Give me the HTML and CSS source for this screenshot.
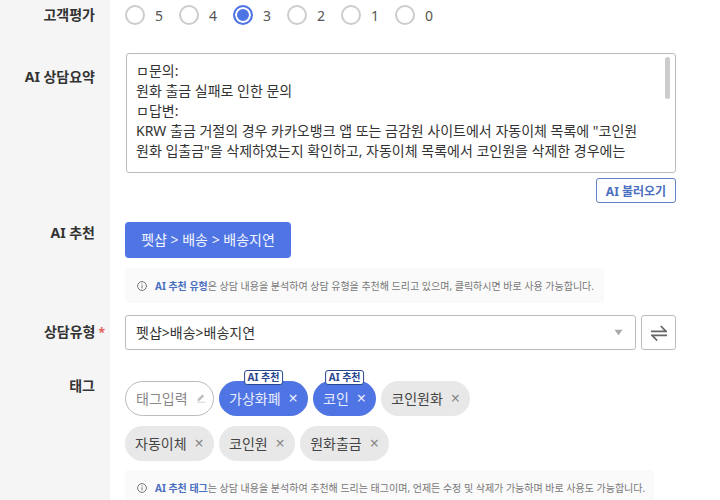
FILE: index.html
```html
<!DOCTYPE html>
<html lang="ko">
<head>
<meta charset="utf-8">
<title>상담 입력</title>
<link rel="stylesheet" href="styles.css">
</head>
<body>
<main class="form">
  <div class="label label-rating">고객평가</div>
  <div class="field field-rating">
    <span class="radio"></span><span class="rnum">5</span>
    <span class="radio"></span><span class="rnum">4</span>
    <span class="radio on"></span><span class="rnum">3</span>
    <span class="radio"></span><span class="rnum">2</span>
    <span class="radio"></span><span class="rnum">1</span>
    <span class="radio"></span><span class="rnum">0</span>
  </div>

  <div class="label label-summary">AI 상담요약</div>
  <div class="field field-summary">
    <div class="summary">
      <div class="line">ㅁ문의:</div>
      <div class="line">원화 출금 실패로 인한 문의</div>
      <div class="line">ㅁ답변:</div>
      <div class="line">KRW 출금 거절의 경우 카카오뱅크 앱 또는 금감원 사이트에서 자동이체 목록에 "코인원</div>
      <div class="line">원화 입출금"을 삭제하였는지 확인하고, 자동이체 목록에서 코인원을 삭제한 경우에는</div>
      <span class="thumb"></span>
    </div>
    <div class="summary-actions"><button class="load-btn">AI 불러오기</button></div>
  </div>

  <div class="label label-rec">AI 추천</div>
  <div class="field field-rec">
    <button class="rec-btn">펫샵 &gt; 배송 &gt; 배송지연</button>
    <div class="info info-type">
      <svg class="info-icon" viewBox="0 0 12 12"><circle cx="6" cy="6" r="4.4" fill="none" stroke="#777" stroke-width="1"/><rect x="5.5" y="5.2" width="1" height="3.2" fill="#777"/><rect x="5.5" y="3.4" width="1" height="1" fill="#777"/></svg>
      <span><b>AI 추천 유형</b>은 상담 내용을 분석하여 상담 유형을 추천해 드리고 있으며, 클릭하시면 바로 사용 가능합니다.</span>
    </div>
  </div>

  <div class="label label-type">상담유형<em>*</em></div>
  <div class="field field-type">
    <div class="select">
      <span>펫샵&gt;배송&gt;배송지연</span>
      <svg class="caret" viewBox="0 0 10 7"><path d="M0.5 0.5H9.5L5 6.5Z" fill="#aaa"/></svg>
    </div>
    <button class="swap">
      <svg viewBox="0 0 16 16" width="16" height="16"><path d="M0 6.3H15L9.8 1M16 10.4H1L6.2 15.6" fill="none" stroke="#666" stroke-width="1.7"/></svg>
    </button>
  </div>

  <div class="label label-tag">태그</div>
  <div class="field field-tag">
    <div class="tags">
      <div class="tag tag-input">태그입력<svg class="pencil" viewBox="0 0 10 10"><path d="M2 6.2L6.4 1.8L7.8 3.2L3.4 7.6H2Z M1 9.2H9.4" fill="#bbb" stroke="#bbb" stroke-width=".6"/></svg></div>
      <div class="tag tag-ai"><span class="badge">AI 추천</span>가상화폐<span class="x">×</span></div>
      <div class="tag tag-ai"><span class="badge">AI 추천</span>코인<span class="x">×</span></div>
      <div class="tag">코인원화<span class="x">×</span></div>
      <div class="tag">자동이체<span class="x">×</span></div>
      <div class="tag">코인원<span class="x">×</span></div>
      <div class="tag">원화출금<span class="x">×</span></div>
    </div>
    <div class="info info-tag">
      <svg class="info-icon" viewBox="0 0 12 12"><circle cx="6" cy="6" r="4.4" fill="none" stroke="#777" stroke-width="1"/><rect x="5.5" y="5.2" width="1" height="3.2" fill="#777"/><rect x="5.5" y="3.4" width="1" height="1" fill="#777"/></svg>
      <span><b>AI 추천 태그</b>는 상담 내용을 분석하여 추천해 드리는 태그이며, 언제든 수정 및 삭제가 가능하며 바로 사용도 가능합니다.</span>
    </div>
  </div>
</main>
</body>
</html>
```

FILE: styles.css
```css
* { box-sizing: border-box; }
html, body { margin: 0; height: 500px; overflow: hidden; background: #fff; }
body { font-family: "Noto Sans", "Noto Sans CJK KR", sans-serif; font-size: 14px; color: #333; }
button { font-family: inherit; cursor: pointer; }

.form { display: grid; grid-template-columns: 110px 1fr; grid-template-rows: 53px 169px 93px 61px 1fr; height: 500px; }
.label { background: #f5f5f5; text-align: right; padding-right: 15px; font-weight: 700; font-size: 14px; line-height: 20px; color: #333; }
.field { padding-left: 15px; padding-right: 44px; background: #fff; }

.label-rating { padding-top: 5px; }
.field-rating { display: flex; align-items: center; padding-bottom: 23px; }
.radio { width: 20px; height: 20px; border: 2px solid #ccc; border-radius: 50%; background: #fff; flex: none; }
.radio.on { border-color: #4f74e3; box-shadow: inset 0 0 0 2px #fff; background: #4f74e3; }
.rnum { width: 34px; padding-left: 10px; color: #555; font-size: 14px; }

.label-summary { padding-top: 14px; }
.summary { position: relative; height: 120px; margin-left: 1px; border: 1px solid #bbb; border-radius: 3px; padding: 7px 9px; line-height: 20px; color: #333; }
.line { white-space: nowrap; }
.thumb { position: absolute; top: 3px; right: 5px; width: 5px; height: 42px; background: #ccc; border-radius: 3px; }
.summary-actions { display: flex; justify-content: flex-end; margin-top: 5px; }
.load-btn { height: 25px; width: 80px; padding: 0; border: 1px solid #5f7fc6; border-radius: 3px; background: #fff; color: #4a6fc0; font-size: 12px; font-weight: 700; }

.label-rec { padding-top: 1px; }
.rec-btn { display: block; width: 166px; height: 36px; padding: 0 0 2px; border: 0; border-radius: 4px; background: #4f74e3; color: #f2f4ff; font-size: 14px; }
.info { display: flex; align-items: center; gap: 6px; height: 35px; padding: 0 11px; background: #fafafa; border-radius: 3px; font-size: 10px; color: #777; white-space: nowrap; }
.info b { color: #4a6fc0; font-weight: 700; }
.info-icon { width: 12px; height: 12px; flex: none; margin-right: 1px; }
.info-type { width: 479px; margin-top: 10px; }
.info-tag { width: 529px; margin-top: 9px; }

.label-type { padding-top: 7px; padding-right: 5px; }
.label-type em { font-style: normal; color: #e0605a; margin-left: 3px; font-size: 12px; }
.field-type { display: flex; gap: 5px; }
.select { flex: 1; height: 35px; display: flex; align-items: center; justify-content: space-between; border: 1px solid #bbb; border-radius: 3px; padding: 0 12px 2px 10px; color: #333; }
.caret { width: 9px; height: 7px; margin-top: 2px; }
.swap { width: 35px; height: 35px; padding: 0; border: 1px solid #bbb; border-radius: 3px; background: #fff; display: flex; align-items: center; justify-content: center; }

.field-tag { padding-top: 5px; }
.tags { display: flex; flex-wrap: wrap; gap: 10px 5px; width: 400px; }
.tag { position: relative; display: flex; align-items: center; height: 35px; padding: 0 10px 1px; border-radius: 18px; background: #e8e8e8; color: #444; font-size: 14px; white-space: nowrap; }
.tag-input { background: #fff; border: 1px solid #bbb; color: #888; width: 89px; }
.pencil { width: 10px; height: 10px; margin-left: 8px; flex: none; }
.tag-ai { background: #4f74e3; color: #e8edff; }
.x { width: 10px; margin-left: 7.5px; text-align: center; font-size: 16px; line-height: 1; color: #888; }
.tag-ai .x { color: #e8edff; }
.badge { position: absolute; top: -11px; left: 50%; transform: translateX(-50%); height: 15px; padding: 0 3px; line-height: 13px; background: #fff; border: 1px solid #27468e; border-radius: 3px; color: #27468e; font-size: 10px; font-weight: 700; }
```
